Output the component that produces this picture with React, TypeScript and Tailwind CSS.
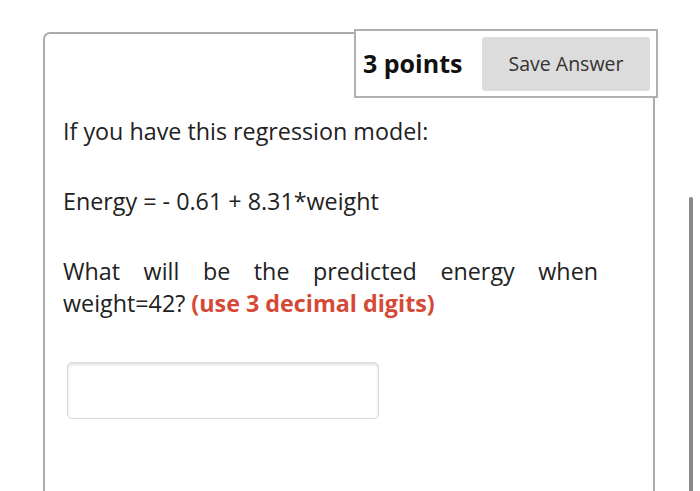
import React from 'react';

const font = { fontFamily: '"Open Sans", "Noto Sans", sans-serif' };

export default function App() {
  return (
    <div className="relative w-[700px] h-[491px] overflow-hidden bg-white text-[#222]" style={font}>
      <div className="ml-[43px] mt-[32px] w-[612px] h-[480px] border-2 border-[#ababab] rounded-t-[7px]">
        <div className="flex justify-end -mt-[5px] -mr-[5px]">
          <div className="flex items-center w-[304px] h-[69px] border-2 border-[#b0b0b0] bg-white pl-[7px] pr-[6px]">
            <span className="text-[25px] font-bold text-[#111] leading-none">3 points</span>
            <button className="ml-auto w-[168px] h-[54px] rounded-[3px] bg-[#dcdcdc] text-[19.5px] text-[#333]">
              Save Answer
            </button>
          </div>
        </div>

        <div className="pl-[18px] pt-[17px] w-[553px] text-[23.3px] leading-[32px] flex flex-col gap-[38px]">
          <p>If you have this regression model:</p>
          <p>Energy = - 0.61 + 8.31*weight</p>
          <p className="text-justify">
            What will be the predicted energy when weight=42?{' '}
            <span className="font-bold text-[#d44a37]">(use 3 decimal digits)</span>
          </p>
        </div>

        <div className="pl-[22px] pt-[43px]">
          <input
            type="text"
            className="block w-[312px] h-[57px] rounded-[5px] border border-[#dadada] shadow-[inset_0_2px_3px_rgba(0,0,0,0.12)] outline-none"
          />
        </div>
      </div>

      <div className="absolute left-[689px] top-[197px] w-[4px] h-[300px] bg-[#888] rounded-t-sm" />
    </div>
  );
}
